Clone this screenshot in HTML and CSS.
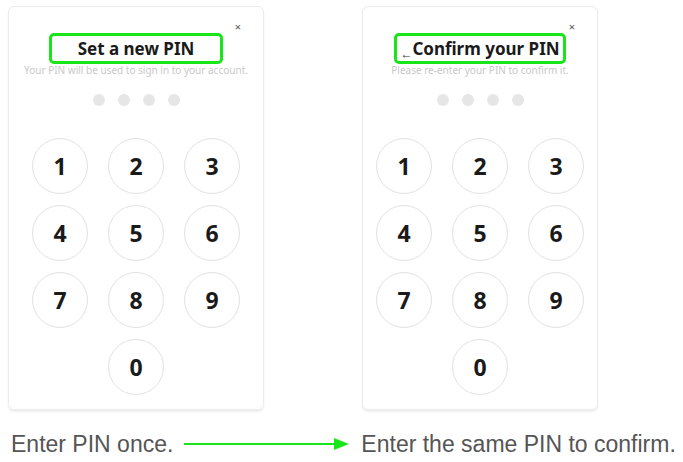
FILE: index.html
```html
<!DOCTYPE html>
<html lang="en">
  <head>
    <meta charset="utf-8" />
    <meta name="viewport" content="width=device-width, initial-scale=1" />
    <title>PIN setup</title>
    <link rel="stylesheet" href="styles.css">
  </head>
  <body>
    <!-- The two dialogs side by side -->
    <div class="panels">
      <!-- Step 1 -->
      <div class="card card-new">
        <span class="close">&times;</span>
        <h3 class="card-title"><span class="title-box">Set a new PIN</span></h3>
        <p class="card-sub">Your PIN will be used to sign in to your account.</p>
        <div class="dots">
          <span></span><span></span><span></span><span></span>
        </div>
        <div class="keypad">
          <button>1</button><button>2</button><button>3</button>
          <button>4</button><button>5</button><button>6</button>
          <button>7</button><button>8</button><button>9</button>
          <button class="zero">0</button>
        </div>
      </div>

      <!-- Step 2 -->
      <div class="card card-confirm">
        <span class="close">&times;</span>
        <h3 class="card-title"><span class="title-box"><span class="back">&larr;</span>Confirm your PIN</span></h3>
        <p class="card-sub">Please re-enter your PIN to confirm it.</p>
        <div class="dots">
          <span></span><span></span><span></span><span></span>
        </div>
        <div class="keypad">
          <button>1</button><button>2</button><button>3</button>
          <button>4</button><button>5</button><button>6</button>
          <button>7</button><button>8</button><button>9</button>
          <button class="zero">0</button>
        </div>
      </div>
    </div>

    <!-- Caption under the dialogs -->
    <div class="caption">
      <span>Enter PIN once.</span>
      <svg class="flow-arrow" width="165" height="14" viewBox="0 0 165 14">
        <line x1="0" y1="7" x2="152" y2="7" stroke="#18e618" stroke-width="2" />
        <polygon points="150,1 165,7 150,13" fill="#18e618" />
      </svg>
      <span>Enter the same PIN to confirm.</span>
    </div>
  </body>
</html>
```

FILE: styles.css
```css
/* Page */
body {
  margin: 0;
  font-family: "Noto Sans", "Open Sans", sans-serif;
  background: #fff;
}

/* Dialog row */
.panels {
  display: flex;
  gap: 98px;
  padding: 6px 0 0 8px;
}

/* Dialog card */
.card {
  position: relative;
  display: flex;
  flex-direction: column;
  align-items: center;
  padding: 26px 0 14px;
  border: 1px solid #ececec;
  border-radius: 6px;
  box-shadow: 0 2px 2px rgba(0, 0, 0, 0.07);
}

.card-new {
  width: 254px;
}

.card-confirm {
  width: 234px;
}

/* Close mark in the corner */
.close {
  position: absolute;
  top: 14px;
  right: 22px;
  font-size: 11px;
  line-height: 12px;
  color: #555;
}

/* Title with the green highlight */
.card-title {
  margin: 0;
  font-size: 17px;
  line-height: 25px;
  font-weight: 700;
  color: #1a1a1a;
}

.title-box {
  display: inline-block;
  height: 25px;
  line-height: 25px;
  border: 3px solid #18e618;
  border-radius: 5px;
}

.card-new .title-box {
  padding: 0 26px;
}

.card-confirm .title-box {
  padding: 0 3px 0 3px;
}

.back {
  display: inline-block;
  font-size: 12px;
  line-height: 10px;
  font-weight: 400;
  color: #333;
  vertical-align: -3px;
}

/* Subtitle */
.card-sub {
  margin: 0;
  font-size: 10px;
  line-height: 12px;
  color: #c8c8c8;
}

/* PIN dots */
.dots {
  display: flex;
  gap: 13px;
  margin-top: 18px;
}

.dots span {
  width: 12px;
  height: 12px;
  border-radius: 50%;
  background: #e6e6e6;
}

/* Number pad */
.keypad {
  display: grid;
  grid-template-columns: repeat(3, 56px);
  column-gap: 20px;
  row-gap: 11px;
  margin-top: 32px;
}

.keypad button {
  width: 56px;
  height: 56px;
  padding: 0;
  border: 1.5px solid #e2e2e2;
  border-radius: 50%;
  background: #fff;
  font-family: "Noto Sans", sans-serif;
  font-size: 23px;
  font-weight: 700;
  color: #1a1a1a;
}

.keypad .zero {
  grid-column: 2;
}

/* Caption */
.caption {
  display: flex;
  align-items: center;
  margin-top: 21px;
  padding-left: 11px;
  font-family: "Liberation Sans", Arial, sans-serif;
  font-size: 23px;
  line-height: 26px;
  color: #555;
}

.flow-arrow {
  margin: 0 12px 0 11px;
}
```
